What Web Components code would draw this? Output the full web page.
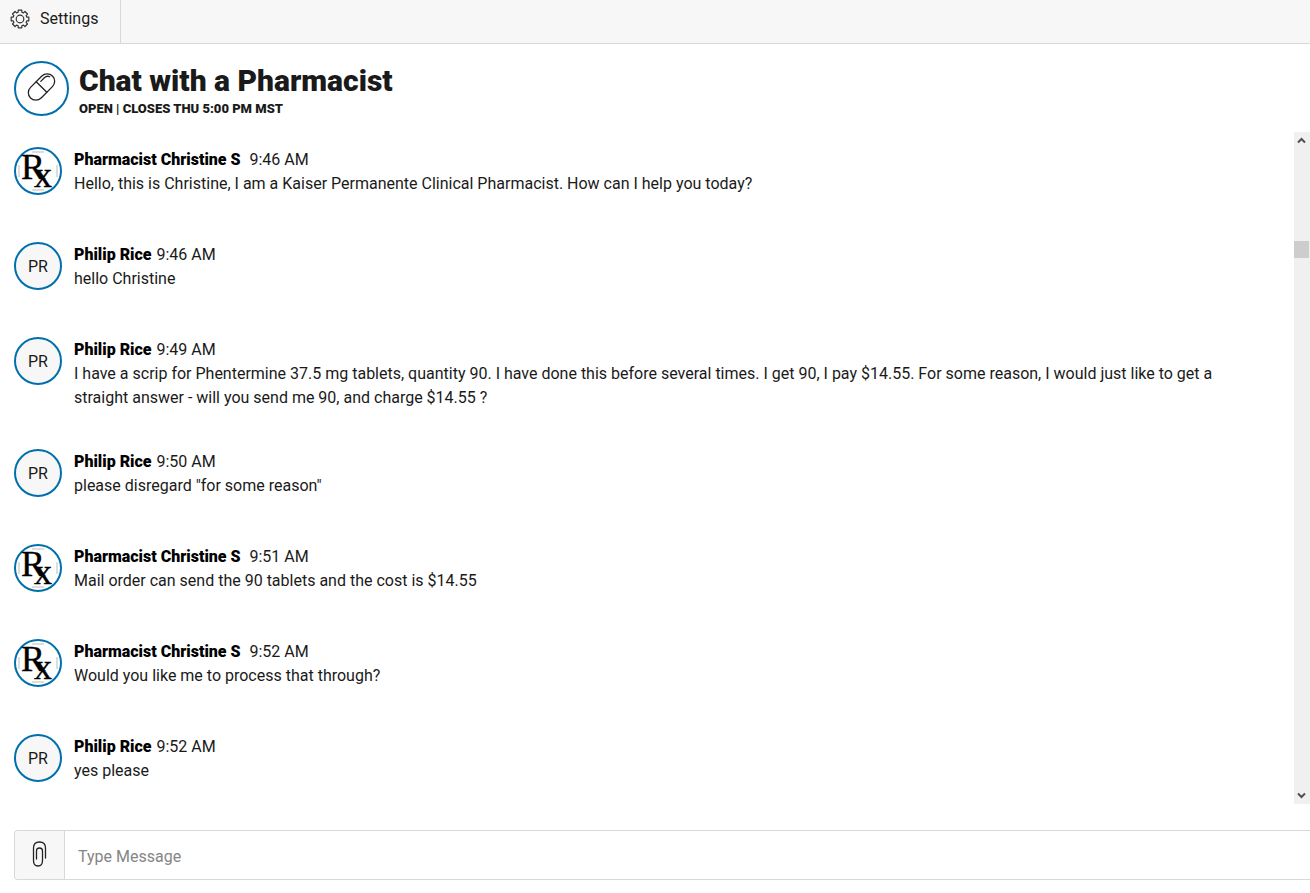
<!DOCTYPE html>
<html lang="en">
<head>
<meta charset="utf-8">
<meta name="viewport" content="width=device-width, initial-scale=1">
<title>Chat with a Pharmacist</title>
<style>
  body { margin: 0; background: #fff; color: #1a1a1a; font: 16px/24px Roboto, "Liberation Sans", sans-serif; }
</style>
</head>
<body>
<chat-app>
  <top-bar slot="top">Settings</top-bar>
  <chat-header slot="header">
    Chat with a Pharmacist
    <span slot="status">OPEN | CLOSES THU 5:00 PM MST</span>
  </chat-header>
  <chat-message kind="rx" name="Pharmacist Christine S&nbsp;" time="9:46 AM">Hello, this is Christine, I am a Kaiser Permanente Clinical Pharmacist. How can I help you today?</chat-message>
  <chat-message name="Philip Rice" time="9:46 AM">hello Christine</chat-message>
  <chat-message name="Philip Rice" time="9:49 AM">I have a scrip for Phentermine 37.5 mg tablets, quantity 90. I have done this before several times. I get 90, I pay $14.55. For some reason, I would just like to get a straight answer - will you send me 90, and charge $14.55 ?</chat-message>
  <chat-message name="Philip Rice" time="9:50 AM">please disregard "for some reason"</chat-message>
  <chat-message kind="rx" name="Pharmacist Christine S&nbsp;" time="9:51 AM">Mail order can send the 90 tablets and the cost is $14.55</chat-message>
  <chat-message kind="rx" name="Pharmacist Christine S&nbsp;" time="9:52 AM">Would you like me to process that through?</chat-message>
  <chat-message name="Philip Rice" time="9:52 AM">yes please</chat-message>
  <chat-composer slot="composer"></chat-composer>
</chat-app>

<script>
function define(name, html, setup) {
  const template = document.createElement('template');
  template.innerHTML = html;
  customElements.define(name, class extends HTMLElement {
    constructor() {
      super();
      this.attachShadow({ mode: 'open' }).append(template.content.cloneNode(true));
    }
    connectedCallback() { if (setup) setup(this, this.shadowRoot); }
  });
}

define('chat-app', `
  <style>
    :host { display: flex; flex-direction: column; height: 100vh; overflow: hidden; }
    main { flex: 1; min-height: 0; display: flex; }
    .log { flex: 1; overflow-y: auto; scrollbar-width: none; padding: 15px 60px 0 14px; }
  </style>
  <slot name="top"></slot>
  <slot name="header"></slot>
  <main><div class="log" role="log" tabindex="-1"><slot></slot></div><scroll-rail></scroll-rail></main>
  <slot name="composer"></slot>
`);

// Gear outline: eight teeth round a ring.
function gearPath() {
  const c = 10, p = [];
  for (let i = 0; i < 8; i++) {
    const a = i * Math.PI / 4;
    [[-0.27, 7], [-0.2, 9], [0.2, 9], [0.27, 7]].forEach(([d, r]) =>
      p.push((c + r * Math.sin(a + d)).toFixed(2) + ' ' + (c - r * Math.cos(a + d)).toFixed(2)));
  }
  return 'M' + p.join('L') + 'Z';
}

define('top-bar', `
  <style>
    :host { display: flex; flex: none; height: 43px; background: #f7f7f7; border-bottom: 1px solid #d8d8d8; }
    button { display: flex; align-items: center; gap: 10px; width: 121px; box-sizing: border-box; padding: 0 0 6px 10px; border: 0; border-right: 1px solid #d8d8d8; background: none; color: inherit; font: inherit; }
    svg { width: 20px; height: 20px; fill: none; stroke: #333; stroke-width: 1.2; stroke-linejoin: round; }
  </style>
  <button type="button"><svg viewBox="0 0 20 20" aria-hidden="true"><path d="${gearPath()}"/><circle cx="10" cy="10" r="3.800"/></svg><slot></slot></button>
`);

define('chat-header', `
  <style>
    :host { display: flex; flex: none; gap: 10px; padding: 17px 14px 16px; height: 55px; }
    .icon { box-sizing: border-box; width: 55px; height: 55px; border: 2px solid #0070ad; border-radius: 50%; }
    svg { display: block; width: 100%; height: 100%; fill: none; stroke: #222; stroke-width: 1.3; stroke-linecap: round; }
    h1 { margin: 0; font-size: 30px; line-height: 40px; font-weight: 900; }
    p { margin: 0; font-size: 13px; line-height: 16px; font-weight: 900; }
  </style>
  <div class="icon"><svg viewBox="0 0 51 51" aria-hidden="true">
    <g transform="rotate(-45 25.5 24)"><rect x="10" y="16.5" width="31" height="15" rx="7.5"/><path d="M25.5 16.5v15M29 19.5h5q3.500 0 4.500 3"/></g>
  </svg></div>
  <div><h1><slot></slot></h1><p><slot name="status"></slot></p></div>
`);

define('chat-message', `
  <style>
    :host { display: flex; gap: 12px; min-height: 56px; margin-bottom: 39px; }
    .avatar { flex: none; box-sizing: border-box; width: 48px; height: 48px; padding-top: 2px; border: 2px solid #0070ad; border-radius: 50%; background: #f7f7f7; display: flex; align-items: center; justify-content: center; }
    .rx { background: #fff; padding: 0; }
    svg { display: block; width: 44px; height: 44px; overflow: visible; }
    text { font-family: "Liberation Serif", serif; fill: #000; stroke: #000; stroke-width: .4; }
    .ring { fill: none; stroke: #bbb; stroke-width: 1; }
    .body { padding-top: 1px; }
    p { margin: 0; }
    b { margin-right: 1px; font-weight: 900; color: #000; }
  </style>
  <div class="avatar"></div>
  <div class="body"><p><b></b> <time></time></p><p><slot></slot></p></div>
`, (host, root) => {
  const name = host.getAttribute('name');
  const avatar = root.querySelector('.avatar');
  root.querySelector('b').textContent = name;
  root.querySelector('time').textContent = host.getAttribute('time');
  if (host.getAttribute('kind') === 'rx') {
    avatar.classList.add('rx');
    avatar.innerHTML = '<svg viewBox="0 0 44 44"><path class="ring" d="M3 16v12M41 16v12M16 3h12M16 41h12"/><text x="5 18" y="30 38" font-size="36">Rx</text></svg>';
  } else {
    avatar.textContent = name.split(' ').map(w => w[0]).join('');
  }
});

define('scroll-rail', `
  <style>
    :host { flex: none; display: flex; flex-direction: column; width: 16px; background: #f0f0f0; }
    button { display: flex; align-items: center; justify-content: center; height: 17px; padding: 0; margin-right: 1px; border: 0; background: none; }
    svg { width: 9px; height: 7px; fill: none; stroke: #505050; stroke-width: 2; }
    .before { flex: 92; } .after { flex: 529; }
    .thumb { height: 17px; margin-right: 1px; background: #cdcdcd; }
  </style>
  <button type="button" aria-label="Scroll up"><svg viewBox="0 0 9 7"><path d="M1 5.500L4.500 2L8 5.500"/></svg></button>
  <div class="before"></div><div class="thumb"></div><div class="after"></div>
  <button type="button" aria-label="Scroll down"><svg viewBox="0 0 9 7"><path d="M1 1.500L4.500 5L8 1.500"/></svg></button>
`);

define('chat-composer', `
  <style>
    :host { display: flex; flex: none; height: 48px; margin: 26px 0 13px 14px; border: 1px solid #d8d8d8; border-right: 0; border-radius: 4px 0 0 4px; overflow: hidden; }
    button { flex: none; width: 50px; padding: 0 0 2px; border: 0; border-right: 1px solid #d8d8d8; background: #f7f7f7; display: flex; align-items: center; justify-content: center; }
    svg { width: 16px; height: 28px; fill: none; stroke: #222; stroke-width: 1.3; stroke-linecap: round; }
    input { flex: 1; min-width: 0; border: 0; outline: 0; padding: 4px 13px 0; background: #fff; color: inherit; font: inherit; }
    input::placeholder { color: #858585; opacity: 1; }
  </style>
  <button type="button" aria-label="Attach file"><svg viewBox="0 0 16 28"><path d="M13.500 18V8Q13.500 2 7.500 2T1.500 8V20.500Q1.500 26 6 26T10.500 20.500V11Q10.500 8 7.500 8T4.500 11V19"/></svg></button>
  <input type="text" placeholder="Type Message" aria-label="Type Message">
`);
</script>
</body>
</html>
